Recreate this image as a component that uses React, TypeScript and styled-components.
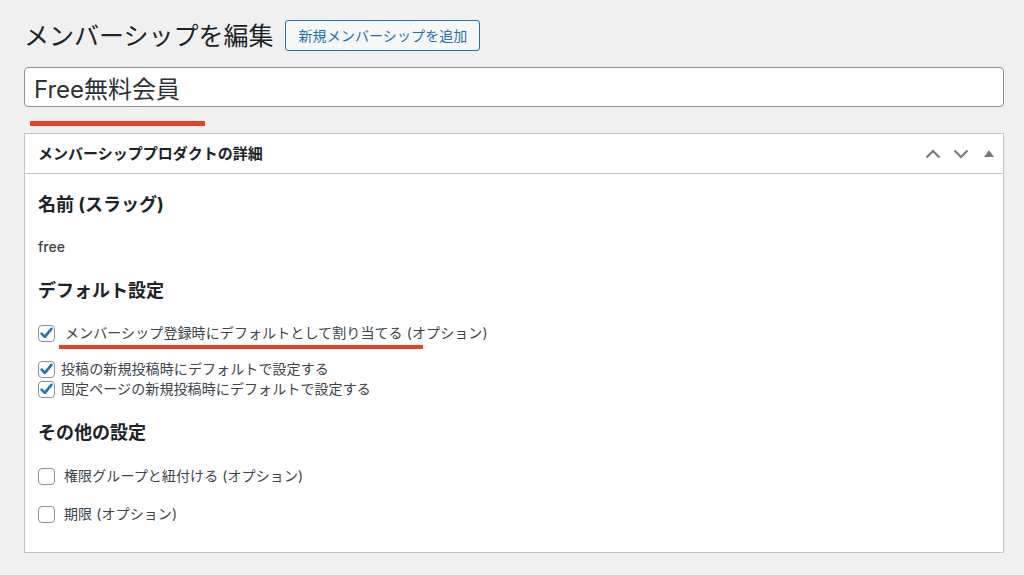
import React from "react";
import styled, { createGlobalStyle } from "styled-components";

const Global = createGlobalStyle`
  html, body { margin: 0; padding: 0; background: #f0f0f1; }
  body {
    font-family: Inter, "Noto Sans CJK JP", sans-serif;
    color: #3c434a;
    -webkit-font-smoothing: antialiased;
  }
  * { box-sizing: border-box; }
`;

const Page = styled.div`
  padding: 20px 20px 0 24px;
  width: 1024px;
`;

const HeaderRow = styled.div`
  display: flex;
  align-items: center;
  gap: 11px;
  height: 31px;
`;

const Title = styled.h1`
  margin: 0;
  font-size: 25px;
  font-weight: 400;
  line-height: 31px;
  color: #1d2327;
  position: relative;
  top: 1px;
`;

const AddButton = styled.button`
  height: 31px;
  padding: 0 12px 0 13px;
  font-family: inherit;
  font-size: 14px;
  letter-spacing: 0.1px;
  color: #2271b1;
  background: #f6f7f7;
  border: 1px solid #2271b1;
  border-radius: 3px;
  line-height: 29px;
  cursor: pointer;
`;

const TitleInput = styled.input`
  display: block;
  margin-top: 16px;
  width: 100%;
  height: 40px;
  padding: 0 9px;
  font-family: inherit;
  font-size: 24px;
  color: #2c3338;
  background: #fff;
  border: 1px solid #8c8f94;
  border-radius: 4px;
  outline: none;
`;

const Marker = styled.div<{ $left: number; $width: number; $height: number; $top: number; $bottom?: number }>`
  margin-left: ${(p) => p.$left}px;
  margin-top: ${(p) => p.$top}px;
  margin-bottom: ${(p) => p.$bottom ?? 0}px;
  width: ${(p) => p.$width}px;
  height: ${(p) => p.$height}px;
  background: #e5402a;
`;

const Postbox = styled.section`
  margin-top: 7px;
  background: #fff;
  border: 1px solid #c3c4c7;
  box-shadow: 0 1px 1px rgba(0, 0, 0, 0.04);
`;

const PostboxHeader = styled.div`
  display: flex;
  align-items: center;
  justify-content: space-between;
  height: 40px;
  border-bottom: 1px solid #c3c4c7;
  padding-left: 13px;
`;

const PostboxTitle = styled.h2`
  margin: 0;
  font-size: 15px;
  font-weight: 700;
  color: #1d2327;
  line-height: 20px;
`;

const HandleActions = styled.div`
  display: flex;
  align-items: center;
  height: 100%;
`;

const HandleButton = styled.span`
  display: flex;
  align-items: center;
  justify-content: center;
  width: 28px;
  height: 36px;
  color: #787c82;
`;

const Inside = styled.div`
  padding: 18px 13px 28px 13px;
`;

const SectionHeading = styled.h3<{ $top?: number }>`
  margin: ${(p) => p.$top ?? 0}px 0 0 0;
  font-size: 18px;
  font-weight: 700;
  line-height: 25px;
  color: #1d2327;
`;

const SlugText = styled.div`
  margin-top: 20px;
  font-size: 14px;
  line-height: 20px;
  font-weight: 500;
  color: #3c434a;
`;

const CheckRow = styled.label<{ $top?: number; $gap: number }>`
  display: flex;
  align-items: center;
  gap: ${(p) => p.$gap}px;
  margin-top: ${(p) => p.$top ?? 0}px;
  height: 20px;
  font-size: 14px;
  letter-spacing: 0.1px;
  line-height: 20px;
  color: #3c434a;
`;

const Box = styled.span`
  flex: 0 0 auto;
  width: 17px;
  height: 17px;
  border: 1px solid #8c8f94;
  border-radius: 4px;
  background: #fff;
  display: flex;
  align-items: center;
  justify-content: center;
`;

const CheckBox = ({ checked }: { checked?: boolean }) => (
  <Box>
    {checked && (
      <svg width="15" height="15" viewBox="0 0 15 15">
        <path
          d="M2.6 7.6 L5.8 10.8 L12.4 2.8"
          fill="none"
          stroke="#2271b1"
          strokeWidth="2.6"
          strokeLinecap="round"
          strokeLinejoin="round"
        />
      </svg>
    )}
  </Box>
);

const Chevron = ({ up }: { up?: boolean }) => (
  <svg width="16" height="10" viewBox="0 0 16 10">
    <path
      d={up ? "M1.5 8.5 L8 2 L14.5 8.5" : "M1.5 1.5 L8 8 L14.5 1.5"}
      fill="none"
      stroke="currentColor"
      strokeWidth="2.2"
    />
  </svg>
);

const Triangle = () => (
  <svg width="10" height="7" viewBox="0 0 10 7">
    <path d="M5 0 L10 7 L0 7 Z" fill="currentColor" />
  </svg>
);

export default function App() {
  return (
    <>
      <Global />
      <Page>
        <HeaderRow>
          <Title>メンバーシップを編集</Title>
          <AddButton>新規メンバーシップを追加</AddButton>
        </HeaderRow>
        <TitleInput defaultValue="Free無料会員" readOnly />
        <Marker $left={6} $width={175} $height={5} $top={14} />
        <Postbox>
          <PostboxHeader>
            <PostboxTitle>メンバーシッププロダクトの詳細</PostboxTitle>
            <HandleActions>
              <HandleButton>
                <Chevron up />
              </HandleButton>
              <HandleButton>
                <Chevron />
              </HandleButton>
              <HandleButton>
                <Triangle />
              </HandleButton>
            </HandleActions>
          </PostboxHeader>
          <Inside>
            <SectionHeading>名前 (スラッグ)</SectionHeading>
            <SlugText>free</SlugText>
            <SectionHeading $top={21}>デフォルト設定</SectionHeading>
            <CheckRow $top={20} $gap={10}>
              <CheckBox checked />
              メンバーシップ登録時にデフォルトとして割り当てる (オプション)
            </CheckRow>
            <Marker $left={21} $width={364} $height={4} $top={2} $bottom={10} />
            <CheckRow $gap={6}>
              <CheckBox checked />
              投稿の新規投稿時にデフォルトで設定する
            </CheckRow>
            <CheckRow $gap={6}>
              <CheckBox checked />
              固定ページの新規投稿時にデフォルトで設定する
            </CheckRow>
            <SectionHeading $top={21}>その他の設定</SectionHeading>
            <CheckRow $top={21} $gap={9}>
              <CheckBox />
              権限グループと紐付ける (オプション)
            </CheckRow>
            <CheckRow $top={18} $gap={9}>
              <CheckBox />
              期限 (オプション)
            </CheckRow>
          </Inside>
        </Postbox>
      </Page>
    </>
  );
}
